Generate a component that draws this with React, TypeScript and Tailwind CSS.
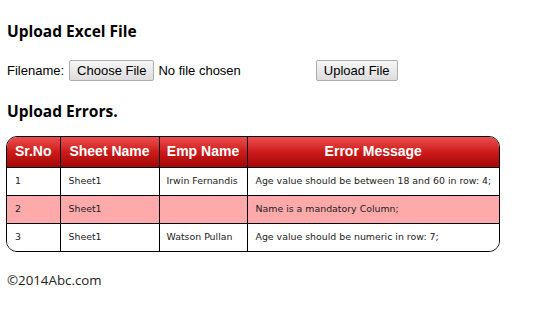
import React from "react";

interface UploadError {
    srNo: number;
    sheet: string;
    emp: string;
    message: string;
}

const errors: UploadError[] = [
    { srNo: 1, sheet: "Sheet1", emp: "Irwin Fernandis", message: "Age value should be between 18 and 60 in row: 4;" },
    { srNo: 2, sheet: "Sheet1", emp: "", message: "Name is a mandatory Column;" },
    { srNo: 3, sheet: "Sheet1", emp: "Watson Pullan", message: "Age value should be numeric in row: 7;" },
];

const btn =
    "h-[21px] px-[7px] border border-[#adadad] rounded-[2px] bg-gradient-to-b from-[#f6f6f6] to-[#dddddd] text-[13px] leading-[19px] text-black";

export default function App() {
    return (
        <div className="min-h-screen bg-white px-[7px] pt-[21px] text-black">
            <h1 className="h-[20px] leading-[20px] text-[15.5px] font-bold font-['Open_Sans',sans-serif]">
                Upload Excel File
            </h1>

            {/* Upload row */}
            <div className="mt-[19px] flex items-center h-[21px] font-['Liberation_Sans',Arial,sans-serif] text-[13px]">
                <span>Filename:</span>
                <button className={`${btn} ml-[5px]`}>Choose File</button>
                <span className="ml-[4px]">No file chosen</span>
                <button className={`${btn} ml-[75px]`}>Upload File</button>
            </div>

            <h2 className="mt-[20px] h-[20px] leading-[20px] text-[15.5px] font-bold font-['Open_Sans',sans-serif]">
                Upload Errors.
            </h2>

            {/* Error table */}
            <div className="mt-[15px] -ml-[1px] w-[494px] border border-black rounded-[11px] overflow-hidden">
                <table className="w-full border-collapse table-fixed">
                    <colgroup>
                        <col className="w-[53px]" />
                        <col className="w-[99px]" />
                        <col className="w-[88px]" />
                        <col />
                    </colgroup>
                    <thead>
                        <tr className="h-[30px] bg-gradient-to-b from-[#ec4b4b] via-[#cc1a1a] to-[#a50606]">
                            {["Sr.No", "Sheet Name", "Emp Name", "Error Message"].map((h, i) => (
                                <th
                                    key={h}
                                    className={`p-0 text-center text-white font-bold text-[14px] font-['Liberation_Sans',Arial,sans-serif] ${
                                        i > 0 ? "border-l border-black" : ""
                                    }`}
                                >
                                    {h}
                                </th>
                            ))}
                        </tr>
                    </thead>
                    <tbody className="font-['DejaVu_Sans',Verdana,sans-serif] text-[9.4px] text-[#222]">
                        {errors.map((e) => (
                            <tr
                                key={e.srNo}
                                className={`h-[28px] border-t border-black ${e.srNo === 2 ? "bg-[#ffaaaa]" : "bg-white"}`}
                            >
                                <td className="pl-[8px]">{e.srNo}</td>
                                <td className="pl-[8px] border-l border-black">{e.sheet}</td>
                                <td className="pl-[7px] border-l border-black">{e.emp}</td>
                                <td className="pl-[8px] border-l border-black">{e.message}</td>
                            </tr>
                        ))}
                    </tbody>
                </table>
            </div>

            <footer className="mt-[19px] h-[18px] leading-[18px] text-[13.3px] text-[#222] font-['Open_Sans',sans-serif]">
                ©2014Abc.com
            </footer>
        </div>
    );
}
